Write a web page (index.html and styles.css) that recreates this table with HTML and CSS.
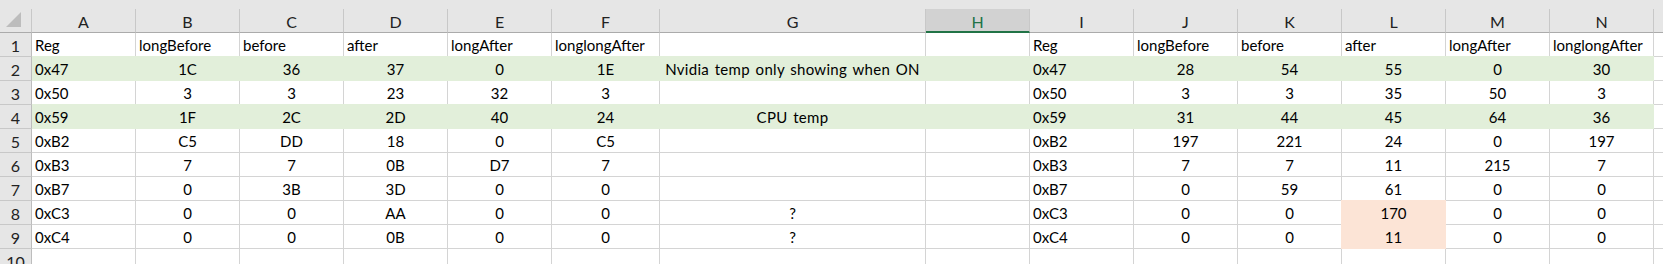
FILE: index.html
```html
<!DOCTYPE html>
<html lang="en">
<head>
<meta charset="utf-8">
<title>Registers</title>
<link rel="stylesheet" href="styles.css">
</head>
<body>
<div class="band"></div>
<div class="sheet">
  <!-- column headers -->
  <div class="ch corner"><span class="tri"></span></div>
  <div class="ch">A</div><div class="ch">B</div><div class="ch">C</div><div class="ch">D</div><div class="ch">E</div><div class="ch">F</div><div class="ch">G</div>
  <div class="ch sel">H</div>
  <div class="ch">I</div><div class="ch">J</div><div class="ch">K</div><div class="ch">L</div><div class="ch">M</div><div class="ch">N</div>
  <div class="ch end"></div>

  <!-- row 1 -->
  <div class="rh">1</div>
  <div class="c l">Reg</div><div class="c l">longBefore</div><div class="c l">before</div><div class="c l">after</div><div class="c l">longAfter</div><div class="c l">longlongAfter</div>
  <div class="c"></div><div class="c"></div>
  <div class="c l">Reg</div><div class="c l">longBefore</div><div class="c l">before</div><div class="c l">after</div><div class="c l">longAfter</div><div class="c l">longlongAfter</div>
  <div class="c end"></div>

  <!-- row 2 -->
  <div class="rh">2</div>
  <div class="c l g">0x47</div><div class="c g">1C</div><div class="c g">36</div><div class="c g">37</div><div class="c g">0</div><div class="c g">1E</div>
  <div class="c g note">Nvidia temp only showing when ON</div><div class="c g"></div>
  <div class="c l g">0x47</div><div class="c g">28</div><div class="c g">54</div><div class="c g">55</div><div class="c g">0</div><div class="c g">30</div>
  <div class="c end"></div>

  <!-- row 3 -->
  <div class="rh">3</div>
  <div class="c l">0x50</div><div class="c">3</div><div class="c">3</div><div class="c">23</div><div class="c">32</div><div class="c">3</div>
  <div class="c"></div><div class="c"></div>
  <div class="c l">0x50</div><div class="c">3</div><div class="c">3</div><div class="c">35</div><div class="c">50</div><div class="c">3</div>
  <div class="c end"></div>

  <!-- row 4 -->
  <div class="rh">4</div>
  <div class="c l g">0x59</div><div class="c g">1F</div><div class="c g">2C</div><div class="c g">2D</div><div class="c g">40</div><div class="c g">24</div>
  <div class="c g note">CPU temp</div><div class="c g"></div>
  <div class="c l g">0x59</div><div class="c g">31</div><div class="c g">44</div><div class="c g">45</div><div class="c g">64</div><div class="c g">36</div>
  <div class="c end"></div>

  <!-- row 5 -->
  <div class="rh">5</div>
  <div class="c l">0xB2</div><div class="c">C5</div><div class="c">DD</div><div class="c">18</div><div class="c">0</div><div class="c">C5</div>
  <div class="c"></div><div class="c"></div>
  <div class="c l">0xB2</div><div class="c">197</div><div class="c">221</div><div class="c">24</div><div class="c">0</div><div class="c">197</div>
  <div class="c end"></div>

  <!-- row 6 -->
  <div class="rh">6</div>
  <div class="c l">0xB3</div><div class="c">7</div><div class="c">7</div><div class="c">0B</div><div class="c">D7</div><div class="c">7</div>
  <div class="c"></div><div class="c"></div>
  <div class="c l">0xB3</div><div class="c">7</div><div class="c">7</div><div class="c">11</div><div class="c">215</div><div class="c">7</div>
  <div class="c end"></div>

  <!-- row 7 -->
  <div class="rh">7</div>
  <div class="c l">0xB7</div><div class="c">0</div><div class="c">3B</div><div class="c">3D</div><div class="c">0</div><div class="c">0</div>
  <div class="c"></div><div class="c"></div>
  <div class="c l">0xB7</div><div class="c">0</div><div class="c">59</div><div class="c">61</div><div class="c">0</div><div class="c">0</div>
  <div class="c end"></div>

  <!-- row 8 -->
  <div class="rh">8</div>
  <div class="c l">0xC3</div><div class="c">0</div><div class="c">0</div><div class="c">AA</div><div class="c">0</div><div class="c">0</div>
  <div class="c">?</div><div class="c"></div>
  <div class="c l">0xC3</div><div class="c">0</div><div class="c">0</div><div class="c p">170</div><div class="c">0</div><div class="c">0</div>
  <div class="c end"></div>

  <!-- row 9 -->
  <div class="rh">9</div>
  <div class="c l">0xC4</div><div class="c">0</div><div class="c">0</div><div class="c">0B</div><div class="c">0</div><div class="c">0</div>
  <div class="c">?</div><div class="c"></div>
  <div class="c l">0xC4</div><div class="c">0</div><div class="c">0</div><div class="c p">11</div><div class="c">0</div><div class="c">0</div>
  <div class="c end"></div>

  <!-- row 10 -->
  <div class="rh">10</div>
  <div class="c"></div><div class="c"></div><div class="c"></div><div class="c"></div><div class="c"></div><div class="c"></div>
  <div class="c"></div><div class="c"></div>
  <div class="c"></div><div class="c"></div><div class="c"></div><div class="c"></div><div class="c"></div><div class="c"></div>
  <div class="c end"></div>
</div>
</body>
</html>
```
FILE: styles.css
```css
html, body {
  margin: 0;
  padding: 0;
  background: #ffffff;
  overflow: hidden;
}

body {
  width: 1663px;
  height: 264px;
  font-family: Lato, "Liberation Sans", sans-serif;
  font-size: 15px;
  color: #000000;
}

/* strip above the column letters */
.band {
  height: 9px;
  background: #e6e6e6;
}

.sheet {
  display: grid;
  grid-template-columns: 32px repeat(5, 104px) 108px 266px repeat(7, 104px) 1fr;
  grid-auto-rows: 24px;
}

.sheet > div {
  box-sizing: border-box;
  display: flex;
  align-items: center;
  justify-content: center;
  white-space: nowrap;
  line-height: 1;
  padding-top: 2px;
}

/* column header cells */
.ch {
  background: #e6e6e6;
  color: #222222;
  border-right: 1px solid #c8c8c8;
  border-bottom: 1px solid #ababab;
  font-size: 16px;
}

.ch.sel {
  background: #d2d2d2;
  color: #217346;
  border-bottom: 2px solid #217346;
  padding-top: 3px;
}

.ch.end {
  border-right: none;
}

.corner {
  justify-content: flex-end;
  align-items: flex-end;
  padding: 0 4px 4px 0;
}

.tri {
  width: 15px;
  height: 15px;
  background: #bdbdbd;
  clip-path: polygon(100% 0, 100% 100%, 0 100%);
}

/* row numbers */
.rh {
  background: #e6e6e6;
  color: #222222;
  border-right: 1px solid #bdbdbd;
  border-bottom: 1px solid #c8c8c8;
  font-size: 16px;
}

/* worksheet cells */
.c {
  border-right: 1px solid #d4d4d4;
  border-bottom: 1px solid #d4d4d4;
}

.c.l {
  justify-content: flex-start;
  padding-left: 3px;
}

.c.end {
  border-right: none;
}

/* free-text notes in column G */
.c.note {
  letter-spacing: 0.3px;
  word-spacing: 1.5px;
}

/* light green row fill */
.c.g {
  background: #e2efda;
  border-right-color: #e2efda;
  border-bottom-color: #e2efda;
  box-shadow: 0 -1px 0 #e2efda;
}

/* light orange cell fill */
.c.p {
  background: #fce4d6;
  border-right-color: #fce4d6;
  border-bottom-color: #fce4d6;
  box-shadow: -1px 0 0 #fce4d6, 0 -1px 0 #fce4d6, -1px -1px 0 #fce4d6;
}
```
